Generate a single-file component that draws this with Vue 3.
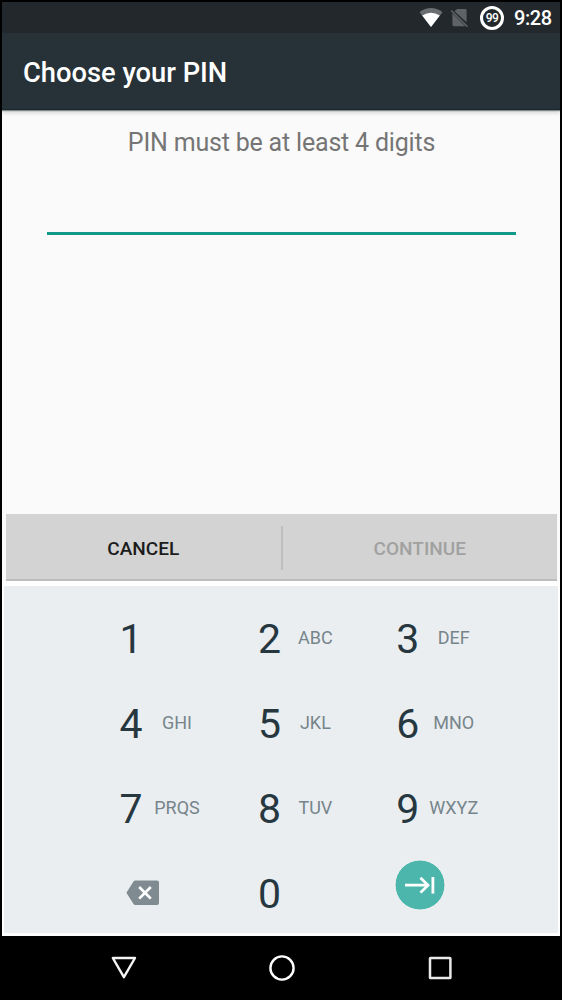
<script setup>
const keys = [
  { digit: '1', letters: '' },
  { digit: '2', letters: 'ABC' },
  { digit: '3', letters: 'DEF' },
  { digit: '4', letters: 'GHI' },
  { digit: '5', letters: 'JKL' },
  { digit: '6', letters: 'MNO' },
  { digit: '7', letters: 'PRQS' },
  { digit: '8', letters: 'TUV' },
  { digit: '9', letters: 'WXYZ' }
]
</script>

<template>
  <div class="phone">
    <div class="status">
      <svg class="wifi" width="24" height="20" viewBox="0 0 24 20">
        <path d="M0.5 4.2Q12 -4 23.5 4.2L12 19Z" fill="#6a6e71" />
        <path d="M3.2 7.5Q12 1.8 20.8 7.5L12 19Z" fill="#fff" />
      </svg>
      <svg class="sim" width="19" height="20" viewBox="0 0 19 20">
        <path d="M7.2 1H15.2Q16.6 1 16.6 2.4V14.2L4.4 3.3ZM2.4 5.2L15.2 18.2H4Q2.4 18.2 2.4 16.6Z" fill="#5f6365" />
        <path d="M1.2 2.5L17.5 18.8" stroke="#5f6365" stroke-width="1.6" />
      </svg>
      <div class="battery">99</div>
      <div class="time">9:28</div>
    </div>
    <header class="bar"><h1>Choose your PIN</h1></header>
    <main class="content">
      <p class="hint">PIN must be at least 4 digits</p>
      <div class="field"></div>
    </main>
    <div class="actions">
      <button class="cancel">CANCEL</button>
      <i class="divider"></i>
      <button class="continue">CONTINUE</button>
    </div>
    <div class="keypad">
      <div v-for="k in keys" :key="k.digit" class="key">
        <span class="digit">{{ k.digit }}</span>
        <span class="letters">{{ k.letters }}</span>
      </div>
      <div class="key">
        <svg class="delete" width="34" height="26" viewBox="0 0 34 26">
          <path d="M9.2 .5H31Q33 .5 33 2.5V23Q33 25 31 25H9.2Q8.2 25 7.5 24L.4 12.8L7.5 1.5Q8.2 .5 9.2 .5Z" fill="#7f8b90" />
          <path d="M13.2 7L24.8 18.6M24.8 7L13.2 18.6" stroke="#fff" stroke-width="2.7" />
        </svg>
      </div>
      <div class="key"><span class="digit">0</span></div>
      <div class="key">
        <svg class="enter" width="52" height="52" viewBox="0 0 52 52">
          <circle cx="26" cy="26" r="25" fill="#4db6ac" stroke="#f3f3f5" stroke-width="1" />
          <path d="M11 26.2H34M26.5 18.8L34 26.2L26.5 33.6" fill="none" stroke="#fff" stroke-width="2.7" />
          <path d="M38.9 18V34.6" stroke="#fff" stroke-width="2.8" />
        </svg>
      </div>
    </div>
    <nav class="nav">
      <svg width="28" height="28" viewBox="0 0 28 28"><path d="M2.8 4H25L13.9 23.2Z" fill="none" stroke="#f4f4f4" stroke-width="2.4" stroke-linejoin="round" /></svg>
      <svg width="28" height="28" viewBox="0 0 28 28"><circle cx="14" cy="14" r="11.6" fill="none" stroke="#fff" stroke-width="2.4" /></svg>
      <svg width="28" height="28" viewBox="0 0 28 28"><rect x="4" y="4" width="20.4" height="20" rx="0.6" fill="none" stroke="#e9e9e9" stroke-width="2.5" /></svg>
    </nav>
  </div>
</template>

<style scoped>
.phone {
  box-sizing: border-box;
  width: 562px;
  height: 1000px;
  padding: 2px 2px 0 2px;
  background: #000;
  font-family: Roboto, "Liberation Sans", sans-serif;
  display: flex;
  flex-direction: column;
}
.status {
  height: 31px;
  background: #23282c;
  display: flex;
  align-items: center;
  justify-content: flex-end;
  padding-right: 9px;
}
.wifi { margin-right: 7px; }
.sim { margin-right: 11px; }
.battery {
  box-sizing: border-box;
  width: 24px;
  height: 24px;
  border: 3px solid #fff;
  border-radius: 50%;
  color: #fff;
  font-size: 12px;
  line-height: 18px;
  font-weight: 500;
  letter-spacing: -0.6px;
  text-align: center;
  margin-right: 10px;
}
.time {
  color: #fff;
  font-size: 20px;
  letter-spacing: -0.4px;
  font-weight: 500;
  line-height: 30px;
  width: 37px;
  white-space: nowrap;
}
.bar {
  height: 76px;
  background: #273238;
  border-bottom: 1px solid #1c272d;
  position: relative;
  box-shadow: 0 1px 1px #7f8888, 0 3px 4px rgba(0, 0, 0, 0.15);
  clip-path: inset(0 0 -6px 0);
  padding-left: 21px;
}
h1 {
  margin: 0;
  color: #fff;
  font-size: 27.3px;
  line-height: 81px;
  font-weight: 500;
  white-space: nowrap;
}
.content {
  height: 404px;
  background: #fafafa;
  overflow: hidden;
}
.hint {
  margin: 17px 0 0;
  color: #757575;
  font-size: 25px;
  letter-spacing: -0.19px;
  line-height: 32px;
  padding-left: 1px;
  text-align: center;
}
.field {
  height: 3px;
  margin: 73px 44px 0 45px;
  background: #13998a;
}
.actions {
  height: 67px;
  box-sizing: border-box;
  margin: 0;
  border-left: 4px solid #fafafa;
  border-right: 3px solid #fafafa;
  background: #d3d3d3;
  box-shadow: inset 0 -2px #bdbdbd;
  display: flex;
  align-items: center;
}
button {
  flex: 1;
  border: 0;
  padding: 2px 0 0;
  background: transparent;
  font-family: inherit;
  font-size: 19px;
  line-height: 30px;
  font-weight: 500;
}
.cancel { color: #1b1b1b; }
.continue { color: #a1a1a1; }
.divider {
  width: 2px;
  height: 44px;
  background: #bfbfbf;
}
.keypad {
  height: 355px;
  box-sizing: border-box;
  border: solid #fff;
  border-width: 5px 2px 3px 2px;
  background: #eaeef1;
  display: grid;
  grid-template-columns: repeat(3, 138.4px);
  grid-template-rows: repeat(4, 85px);
  padding: 10px 0 0 115.5px;
}
.key {
  height: 85px;
  display: flex;
  align-items: center;
}
.digit {
  width: 23px;
  color: #263740;
  font-size: 41px;
  line-height: 48px;
  text-align: center;
}
.letters {
  width: 69px;
  color: #77858b;
  font-size: 18px;
  line-height: 24px;
  padding-bottom: 2px;
  text-align: center;
}
.delete { margin: 0 0 2px 6.5px; }
.enter { margin: 0 0 17px -2.5px; }
.nav {
  flex: 1;
  display: flex;
  align-items: center;
  justify-content: space-between;
  padding: 0 106px 0 108px;
}
</style>

<style>
html, body { margin: 0; background: #000; overflow: hidden; }
</style>
